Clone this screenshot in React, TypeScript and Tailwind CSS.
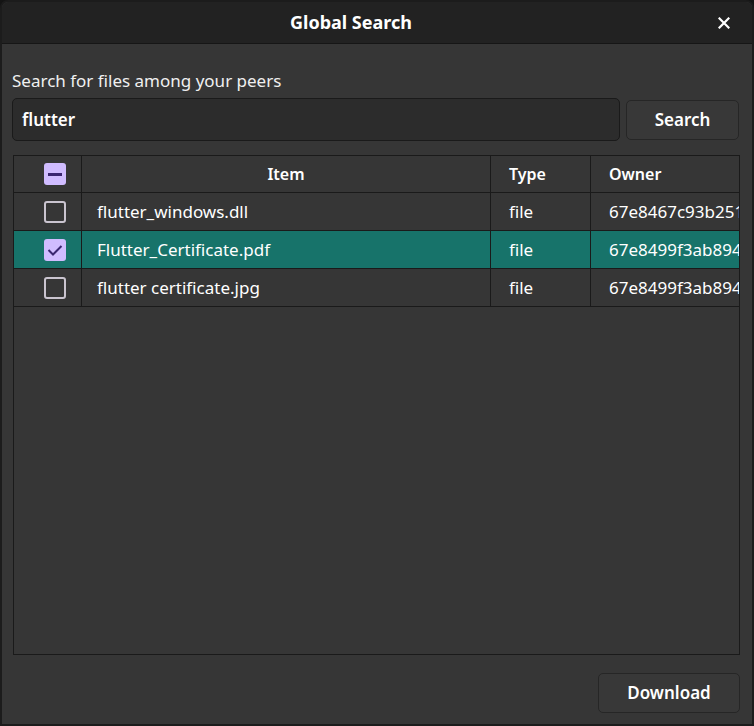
import React from "react";

const font = { fontFamily: '"Noto Sans", "Segoe UI", sans-serif' };

function Box({ state }: { state: "none" | "checked" | "indeterminate" }) {
  if (state === "none") {
    return <div className="w-[22px] h-[22px] rounded-[3px] border-2 border-[#cac4cf]" />;
  }
  return (
    <div className="w-[22px] h-[22px] rounded-[3px] bg-[#d0bcff] flex items-center justify-center">
      {state === "indeterminate" ? (
        <div className="w-[14px] h-[3px] bg-[#3a2670]" />
      ) : (
        <svg width="18" height="18" viewBox="0 0 18 18">
          <polyline points="2.5,9 7,13.5 15.5,5" fill="none" stroke="#3a2670" strokeWidth="2" />
        </svg>
      )}
    </div>
  );
}

const rows = [
  { name: "flutter_windows.dll", type: "file", owner: "67e8467c93b2517a0c4d12e9", checked: false },
  { name: "Flutter_Certificate.pdf", type: "file", owner: "67e8499f3ab894c21d7e5f03", checked: true },
  { name: "flutter certificate.jpg", type: "file", owner: "67e8499f3ab894c21d7e5f03", checked: false },
];

export default function App() {
  return (
    <div className="w-[754px] h-[726px] bg-[#141414]" style={font}>
      <div className="w-full h-full rounded-t-[8px] border-2 border-[#1c1c1c] bg-[#363636] flex flex-col overflow-hidden text-white">
        <div className="h-[42px] shrink-0 bg-[#222222] border-b border-[#161616] relative flex items-center justify-center pr-[52px]">
          <span className="text-[18px] font-bold">Global Search</span>
          <div className="absolute right-[22px] top-[15px] w-[12px] h-[12px]">
            <svg width="12" height="12" viewBox="0 0 12 12">
              <path d="M1.5 1.5 L10.5 10.5 M10.5 1.5 L1.5 10.5" stroke="#ffffff" strokeWidth="2.2" strokeLinecap="square" />
            </svg>
          </div>
        </div>
        <div className="flex-1 flex flex-col px-[10px] pt-[25px] pb-[11px]">
          <div className="text-[17px] leading-[23px] text-[#f0f0f0]">Search for files among your peers</div>
          <div className="mt-[6px] flex items-center gap-[6px]">
            <div className="w-[608px] h-[43px] rounded-[5px] bg-[#2c2c2c] border border-[#1a1a1a] flex items-center px-[9px]">
              <span className="text-[17px] font-semibold">flutter</span>
            </div>
            <div className="w-[113px] h-[40px] rounded-[5px] bg-[#383838] border border-[#262626] flex items-center justify-center text-[17px] font-semibold">
              Search
            </div>
          </div>
          <div className="mt-[14px] ml-[1px] mr-[2px] flex-1 border border-[#1a1a1a] flex flex-col">
            <div className="h-[37px] flex border-b border-[#1a1a1a] text-[16px] font-semibold">
              <div className="w-[68px] border-r border-[#1a1a1a] flex items-center pl-[30px]">
                <Box state="indeterminate" />
              </div>
              <div className="w-[409px] border-r border-[#1a1a1a] flex items-center justify-center">Item</div>
              <div className="w-[100px] border-r border-[#1a1a1a] flex items-center pl-[18px]">Type</div>
              <div className="flex-1 flex items-center pl-[18px]">Owner</div>
            </div>
            {rows.map((r, i) => (
              <div
                key={i}
                className={
                  "h-[38px] flex border-b border-[#1a1a1a] text-[17px] " +
                  (r.checked ? "bg-[#17736a]" : "")
                }
              >
                <div className="w-[68px] border-r border-[#1a1a1a] flex items-center pl-[30px]">
                  <Box state={r.checked ? "checked" : "none"} />
                </div>
                <div className="w-[409px] border-r border-[#1a1a1a] flex items-center pl-[15px]">{r.name}</div>
                <div className="w-[100px] border-r border-[#1a1a1a] flex items-center pl-[18px]">{r.type}</div>
                <div className="flex-1 flex items-center pl-[18px] overflow-hidden whitespace-nowrap">{r.owner}</div>
              </div>
            ))}
          </div>
          <div className="mt-[18px] mr-[2px] flex justify-end">
            <div className="w-[142px] h-[40px] rounded-[5px] bg-[#383838] border border-[#262626] flex items-center justify-center text-[17px] font-semibold">
              Download
            </div>
          </div>
        </div>
      </div>
    </div>
  );
}
